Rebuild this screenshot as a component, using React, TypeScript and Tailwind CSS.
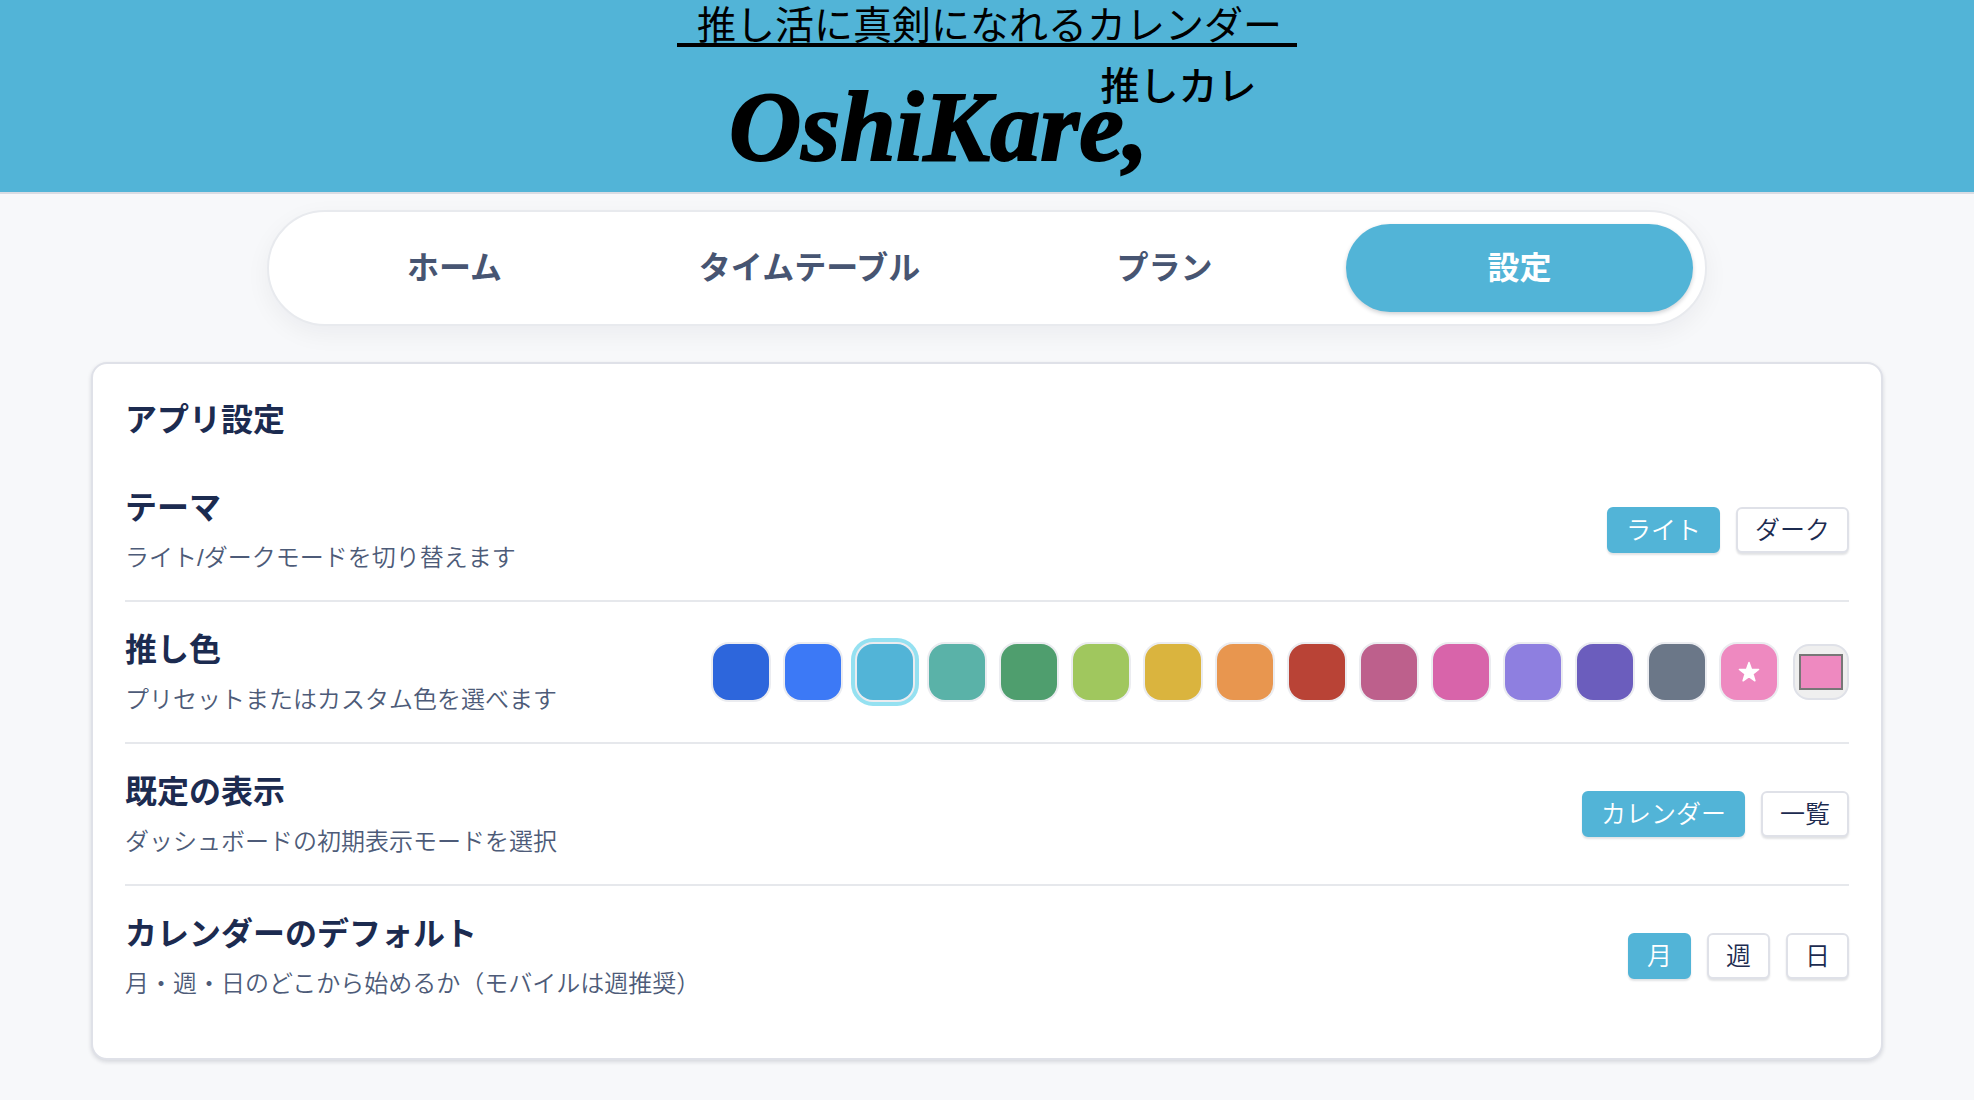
import { useState } from 'react';
import clsx from 'clsx';

const TABS = ['ホーム', 'タイムテーブル', 'プラン', '設定'];

const PRESETS = [
  { name: 'ロイヤルブルー', className: 'bg-[#2d66dc]' },
  { name: 'ブルー', className: 'bg-[#3c79f6]' },
  { name: 'スカイ', className: 'bg-[#52b4d7]' },
  { name: 'ティール', className: 'bg-[#5ab2a8]' },
  { name: 'グリーン', className: 'bg-[#4f9e6e]' },
  { name: 'ライム', className: 'bg-[#a0c75e]' },
  { name: 'イエロー', className: 'bg-[#dab43e]' },
  { name: 'オレンジ', className: 'bg-[#e8964f]' },
  { name: 'レッド', className: 'bg-[#b94336]' },
  { name: 'ローズ', className: 'bg-[#bd608c]' },
  { name: 'マゼンタ', className: 'bg-[#d864aa]' },
  { name: 'ラベンダー', className: 'bg-[#8e7fe0]' },
  { name: 'パープル', className: 'bg-[#6b5dbd]' },
  { name: 'グレー', className: 'bg-[#6b7788]' },
];

const Header = () => {
  return (
    <header className="flex h-[194px] justify-center border-b-2 border-[#d9dce3] bg-[#52b4d7] text-black">
      <div className="w-[620px]">
        <p className="border-b-4 border-black pt-[9px] pl-5 text-[39px] leading-[34px]">
          推し活に真剣になれるカレンダー
        </p>
        <h1 className="flex items-start pl-[52px]">
          <span className="pt-4 font-['Liberation_Serif',serif] text-[100px] leading-[128px] font-bold italic [-webkit-text-stroke:2px_#000000]">
            OshiKare,
          </span>
          <span className="-ml-12 pt-5 text-[39px] leading-10 font-medium">
            推しカレ
          </span>
        </h1>
      </div>
    </header>
  );
};

const Nav = () => {
  const [active, setActive] = useState('設定');

  return (
    <nav className="mx-auto mt-4 grid max-w-[1440px] grid-cols-4 gap-2 rounded-full border-2 border-[#e8eaee] bg-white p-3 shadow-[0_8px_24px_rgba(15,23,42,0.05)]">
      {TABS.map((tab) => (
        <button
          key={tab}
          type="button"
          onClick={() => setActive(tab)}
          className={clsx(
            'h-[88px] rounded-full text-[32px] leading-[48px] font-bold',
            active === tab
              ? 'bg-[#52b4d7] text-white shadow-[0_2px_4px_rgba(15,23,42,0.2)]'
              : 'text-[#475572]'
          )}
        >
          {tab}
        </button>
      ))}
    </nav>
  );
};

type RowProps = {
  title: string;
  description: string;
  children: React.ReactNode;
};

const Row = ({ title, description, children }: RowProps) => {
  return (
    <div className="flex items-center justify-between gap-4 border-b-2 border-[#e6e8ec] py-6 last:border-b-0">
      <div>
        <h3 className="text-[32px] leading-[48px] font-bold text-[#1c2b50]">
          {title}
        </h3>
        <p className="mt-2 text-2xl leading-9 font-[350] text-[#4d5b78]">
          {description}
        </p>
      </div>
      <div className="flex items-center gap-4">{children}</div>
    </div>
  );
};

type ChoiceProps = {
  options: string[];
  initial: string;
};

const Choice = ({ options, initial }: ChoiceProps) => {
  const [value, setValue] = useState(initial);

  return (
    <>
      {options.map((option) => (
        <button
          key={option}
          type="button"
          aria-pressed={value === option}
          onClick={() => setValue(option)}
          className={clsx(
            'h-[46px] rounded-md border-2 px-[17px] text-[25px] leading-10 font-[350] shadow-[0_2px_2px_rgba(15,23,42,0.12)]',
            value === option
              ? 'border-[#52b4d7] bg-[#52b4d7] text-white'
              : 'border-[#dfe1e8] bg-white text-[#1c2b50]'
          )}
        >
          {option}
        </button>
      ))}
    </>
  );
};

const ColorPicker = () => {
  const [selected, setSelected] = useState('スカイ');
  const [custom, setCustom] = useState('#ee89c0');

  return (
    <>
      {PRESETS.map(({ name, className }) => (
        <button
          key={name}
          type="button"
          aria-label={name}
          aria-pressed={selected === name}
          onClick={() => setSelected(name)}
          className={clsx(
            'size-14 rounded-2xl',
            className,
            selected === name
              ? 'shadow-[0_0_0_2px_#ebecf0,0_0_0_6px_#95e1f1]'
              : 'shadow-[0_0_0_2px_#ebecf0]'
          )}
        />
      ))}
      <button
        type="button"
        aria-label="カスタム色"
        onClick={() => setSelected('custom')}
        style={{ backgroundColor: custom }}
        className="flex size-14 items-center justify-center rounded-2xl text-white shadow-[0_0_0_2px_#ebecf0]"
      >
        <svg viewBox="0 0 24 24" className="size-6" aria-hidden="true">
          <path
            d="M12 2.5l2.4 6.8 7.2.2-5.7 4.4 2 6.9-5.9-4.1-5.9 4.1 2-6.9-5.7-4.4 7.2-.2z"
            fill="currentColor"
            stroke="currentColor"
            strokeWidth="1.5"
            strokeLinejoin="round"
          />
        </svg>
      </button>
      <input
        type="color"
        aria-label="カスタム色を選択"
        value={custom}
        onChange={(e) => setCustom(e.target.value)}
        className="size-14 appearance-none rounded-2xl border-2 border-[#dfe1e8] bg-[#efefef] px-1 py-2 [&::-webkit-color-swatch]:rounded-none [&::-webkit-color-swatch]:border-2 [&::-webkit-color-swatch]:border-[#777777] [&::-webkit-color-swatch-wrapper]:p-0"
      />
    </>
  );
};

const App = () => {
  return (
    <div className="min-h-screen bg-[#f7f8fa] font-['Liberation_Sans','Noto_Sans_CJK_JP',sans-serif]">
      <Header />
      <Nav />
      <main className="mx-auto mt-9 max-w-[1792px]">
        <section className="rounded-2xl border-2 border-[#dfe1e8] bg-white p-8 shadow-[0_2px_4px_rgba(15,23,42,0.14)]">
          <h2 className="mb-4 text-[32px] leading-[48px] font-bold text-[#1c2b50]">
            アプリ設定
          </h2>
          <Row title="テーマ" description="ライト/ダークモードを切り替えます">
            <Choice options={['ライト', 'ダーク']} initial="ライト" />
          </Row>
          <Row
            title="推し色"
            description="プリセットまたはカスタム色を選べます"
          >
            <ColorPicker />
          </Row>
          <Row
            title="既定の表示"
            description="ダッシュボードの初期表示モードを選択"
          >
            <Choice options={['カレンダー', '一覧']} initial="カレンダー" />
          </Row>
          <Row
            title="カレンダーのデフォルト"
            description="月・週・日のどこから始めるか（モバイルは週推奨）"
          >
            <Choice options={['月', '週', '日']} initial="月" />
          </Row>
        </section>
      </main>
    </div>
  );
};

export default App;
